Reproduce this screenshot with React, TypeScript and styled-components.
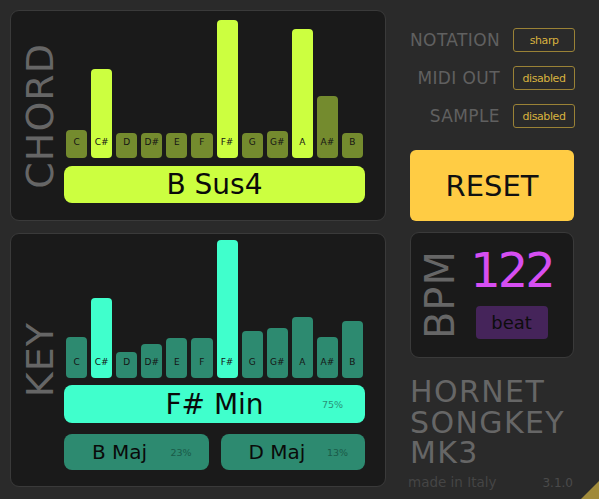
import React from "react";
import styled, { createGlobalStyle } from "styled-components";

const Global = createGlobalStyle`
  html, body { margin: 0; padding: 0; background: #2a2a2a; }
  body { font-family: "DejaVu Sans", "Noto Sans", sans-serif; }
`;

const Page = styled.div`
  position: relative;
  width: 599px;
  height: 499px;
  box-sizing: border-box;
  padding: 10px 0 0 10px;
  display: flex;
  background: #2a2a2a;
  overflow: hidden;
`;

const LeftCol = styled.div`
  width: 376px;
  display: flex;
  flex-direction: column;
  gap: 12px;
`;

const Panel = styled.section<{ $h: number }>`
  box-sizing: border-box;
  height: ${(p) => p.$h}px;
  background: #1a1a1a;
  border: 1px solid #3a3a3a;
  border-radius: 9px;
  display: flex;
  padding: 0 20px 0 10px;
`;

const LabelCol = styled.div`
  width: 38px;
  margin-right: 5px;
  display: flex;
  align-items: center;
  justify-content: center;
`;

const VerticalLabel = styled.div<{ $size: number }>`
  writing-mode: vertical-rl;
  transform: rotate(180deg);
  font-size: ${(p) => p.$size}px;
  line-height: ${(p) => p.$size}px;
  letter-spacing: 1px;
  color: #666666;
  white-space: nowrap;
`;

const Content = styled.div<{ $pb: number }>`
  flex: 1;
  display: flex;
  flex-direction: column;
  justify-content: flex-end;
  padding-bottom: ${(p) => p.$pb}px;
`;

const Bars = styled.div`
  display: grid;
  grid-template-columns: repeat(12, 1fr);
  column-gap: 4px;
  padding: 0 2px;
  align-items: end;
`;

const Bar = styled.div<{ $bg: string }>`
  box-sizing: border-box;
  background: ${(p) => p.$bg};
  border-radius: 4px;
  display: flex;
  flex-direction: column;
  justify-content: flex-end;
  align-items: center;
  padding-bottom: 10px;
  font-size: 9px;
  line-height: 11px;
  color: #141414;
`;

const NameBar = styled.div<{ $bg: string; $h: number; $mt: number }>`
  height: ${(p) => p.$h}px;
  margin-top: ${(p) => p.$mt}px;
  background: ${(p) => p.$bg};
  border-radius: 8px;
  display: grid;
  grid-template-columns: 1fr auto 1fr;
  align-items: center;
  color: #0a0a0a;
`;

const Name = styled.div`
  grid-column: 2;
  font-size: 28px;
  white-space: nowrap;
`;

const Pct = styled.div<{ $color: string }>`
  grid-column: 3;
  justify-self: end;
  padding-right: 22px;
  font-size: 9.5px;
  color: ${(p) => p.$color};
`;

const AltRow = styled.div`
  display: grid;
  grid-template-columns: 1fr 1fr;
  column-gap: 12px;
  margin-top: 11px;
`;

const AltBar = styled.div`
  height: 36px;
  box-sizing: border-box;
  background: #2d8a70;
  border-radius: 8px;
  display: flex;
  align-items: center;
  padding: 0 17px 0 28px;
  color: #0a0a0a;
`;

const AltName = styled.div`
  flex: 1;
  font-size: 20px;
  white-space: nowrap;
`;

const AltPct = styled.div`
  font-size: 9.5px;
  color: #1a5a48;
`;

const RightCol = styled.div`
  width: 165px;
  margin-left: 24px;
  display: flex;
  flex-direction: column;
`;

const Settings = styled.div`
  margin-top: 18px;
  display: flex;
  flex-direction: column;
  gap: 14px;
`;

const SettingRow = styled.div`
  display: grid;
  grid-template-columns: 1fr 62px;
  column-gap: 13px;
  align-items: center;
`;

const SettingLabel = styled.div`
  text-align: right;
  font-size: 17px;
  letter-spacing: 0.4px;
  color: #606060;
  white-space: nowrap;
`;

const SettingBox = styled.div`
  box-sizing: border-box;
  height: 24px;
  border: 1px solid #9a8236;
  border-radius: 3px;
  color: #d9b23f;
  font-size: 11px;
  letter-spacing: -0.4px;
  display: flex;
  align-items: center;
  justify-content: center;
`;

const ResetButton = styled.button`
  margin-top: 22px;
  width: 164px;
  height: 71px;
  border: none;
  border-radius: 6px;
  background: #ffcc44;
  color: #111111;
  font-family: "DejaVu Sans", sans-serif;
  font-size: 29px;
  padding: 0;
  display: flex;
  align-items: center;
  justify-content: center;
`;

const BpmPanel = styled.div`
  box-sizing: border-box;
  margin-top: 11px;
  width: 164px;
  height: 126px;
  background: #1a1a1a;
  border: 1px solid #3a3a3a;
  border-radius: 9px;
  display: flex;
  padding-left: 9px;
`;

const BpmLabelCol = styled.div`
  width: 40px;
  display: flex;
  align-items: center;
  justify-content: center;
`;

const BpmRight = styled.div`
  flex: 1;
  display: flex;
  flex-direction: column;
  align-items: center;
  padding: 13px 10px 0 0;
`;

const BpmValue = styled.div`
  font-size: 48px;
  line-height: 48px;
  letter-spacing: -3px;
  color: #d64ef2;
`;

const BeatBox = styled.div`
  margin-top: 12px;
  width: 72px;
  height: 33px;
  border-radius: 4px;
  background: #45245a;
  color: #0d0d0d;
  font-size: 18px;
  display: flex;
  align-items: center;
  justify-content: center;
`;

const Brand = styled.div`
  margin-top: 19px;
  display: flex;
  flex-direction: column;
`;

const BrandLine = styled.div`
  font-size: 30px;
  line-height: 30.5px;
  letter-spacing: 1.4px;
  color: #666666;
  white-space: nowrap;
`;

const Footer = styled.div`
  margin-top: 5px;
  display: flex;
  justify-content: space-between;
  align-items: baseline;
`;

const MadeIn = styled.div`
  font-size: 13.5px;
  color: #454545;
  margin-left: -2px;
`;

const Version = styled.div`
  font-size: 12px;
  color: #4a4a4a;
  padding-right: 2px;
`;

const Corner = styled.svg`
  position: absolute;
  right: 0;
  bottom: 0;
  width: 18px;
  height: 18px;
`;

const NOTES = ["C", "C#", "D", "D#", "E", "F", "F#", "G", "G#", "A", "A#", "B"];

const chord = [
  { h: 28, on: false },
  { h: 89, on: true },
  { h: 25, on: false },
  { h: 25, on: false },
  { h: 25, on: false },
  { h: 25, on: false },
  { h: 138, on: true },
  { h: 25, on: false },
  { h: 27, on: false },
  { h: 129, on: true },
  { h: 62, on: false },
  { h: 25, on: false },
];

const key = [
  { h: 41, on: false },
  { h: 80, on: true },
  { h: 26, on: false },
  { h: 34, on: false },
  { h: 40, on: false },
  { h: 40, on: false },
  { h: 138, on: true },
  { h: 47, on: false },
  { h: 50, on: false },
  { h: 61, on: false },
  { h: 41, on: false },
  { h: 57, on: false },
];

export default function App() {
  return (
    <Page>
      <Global />
      <LeftCol>
        <Panel $h={211}>
          <LabelCol>
            <VerticalLabel $size={38}>CHORD</VerticalLabel>
          </LabelCol>
          <Content $pb={17}>
            <Bars>
              {chord.map((b, i) => (
                <Bar key={NOTES[i]} $bg={b.on ? "#ccff40" : "#748b2e"} style={{ height: b.h }}>
                  {NOTES[i]}
                </Bar>
              ))}
            </Bars>
            <NameBar $bg="#ccff40" $h={37} $mt={8}>
              <Name>B Sus4</Name>
            </NameBar>
          </Content>
        </Panel>
        <Panel $h={254}>
          <LabelCol>
            <VerticalLabel $size={38}>KEY</VerticalLabel>
          </LabelCol>
          <Content $pb={16}>
            <Bars>
              {key.map((b, i) => (
                <Bar key={NOTES[i]} $bg={b.on ? "#40ffcc" : "#2d8a70"} style={{ height: b.h }}>
                  {NOTES[i]}
                </Bar>
              ))}
            </Bars>
            <NameBar $bg="#40ffcc" $h={38} $mt={7}>
              <Name>F# Min</Name>
              <Pct $color="#2a9278">75%</Pct>
            </NameBar>
            <AltRow>
              <AltBar>
                <AltName>B Maj</AltName>
                <AltPct>23%</AltPct>
              </AltBar>
              <AltBar>
                <AltName>D Maj</AltName>
                <AltPct>13%</AltPct>
              </AltBar>
            </AltRow>
          </Content>
        </Panel>
      </LeftCol>
      <RightCol>
        <Settings>
          <SettingRow>
            <SettingLabel>NOTATION</SettingLabel>
            <SettingBox>sharp</SettingBox>
          </SettingRow>
          <SettingRow>
            <SettingLabel>MIDI OUT</SettingLabel>
            <SettingBox>disabled</SettingBox>
          </SettingRow>
          <SettingRow>
            <SettingLabel>SAMPLE</SettingLabel>
            <SettingBox>disabled</SettingBox>
          </SettingRow>
        </Settings>
        <ResetButton>RESET</ResetButton>
        <BpmPanel>
          <BpmLabelCol>
            <VerticalLabel $size={40}>BPM</VerticalLabel>
          </BpmLabelCol>
          <BpmRight>
            <BpmValue>122</BpmValue>
            <BeatBox>beat</BeatBox>
          </BpmRight>
        </BpmPanel>
        <Brand>
          <BrandLine>HORNET</BrandLine>
          <BrandLine>SONGKEY</BrandLine>
          <BrandLine>MK3</BrandLine>
        </Brand>
        <Footer>
          <MadeIn>made in Italy</MadeIn>
          <Version>3.1.0</Version>
        </Footer>
      </RightCol>
      <Corner viewBox="0 0 18 18">
        <polygon points="0,18 18,0 18,18" fill="#a08a3a" />
      </Corner>
    </Page>
  );
}
